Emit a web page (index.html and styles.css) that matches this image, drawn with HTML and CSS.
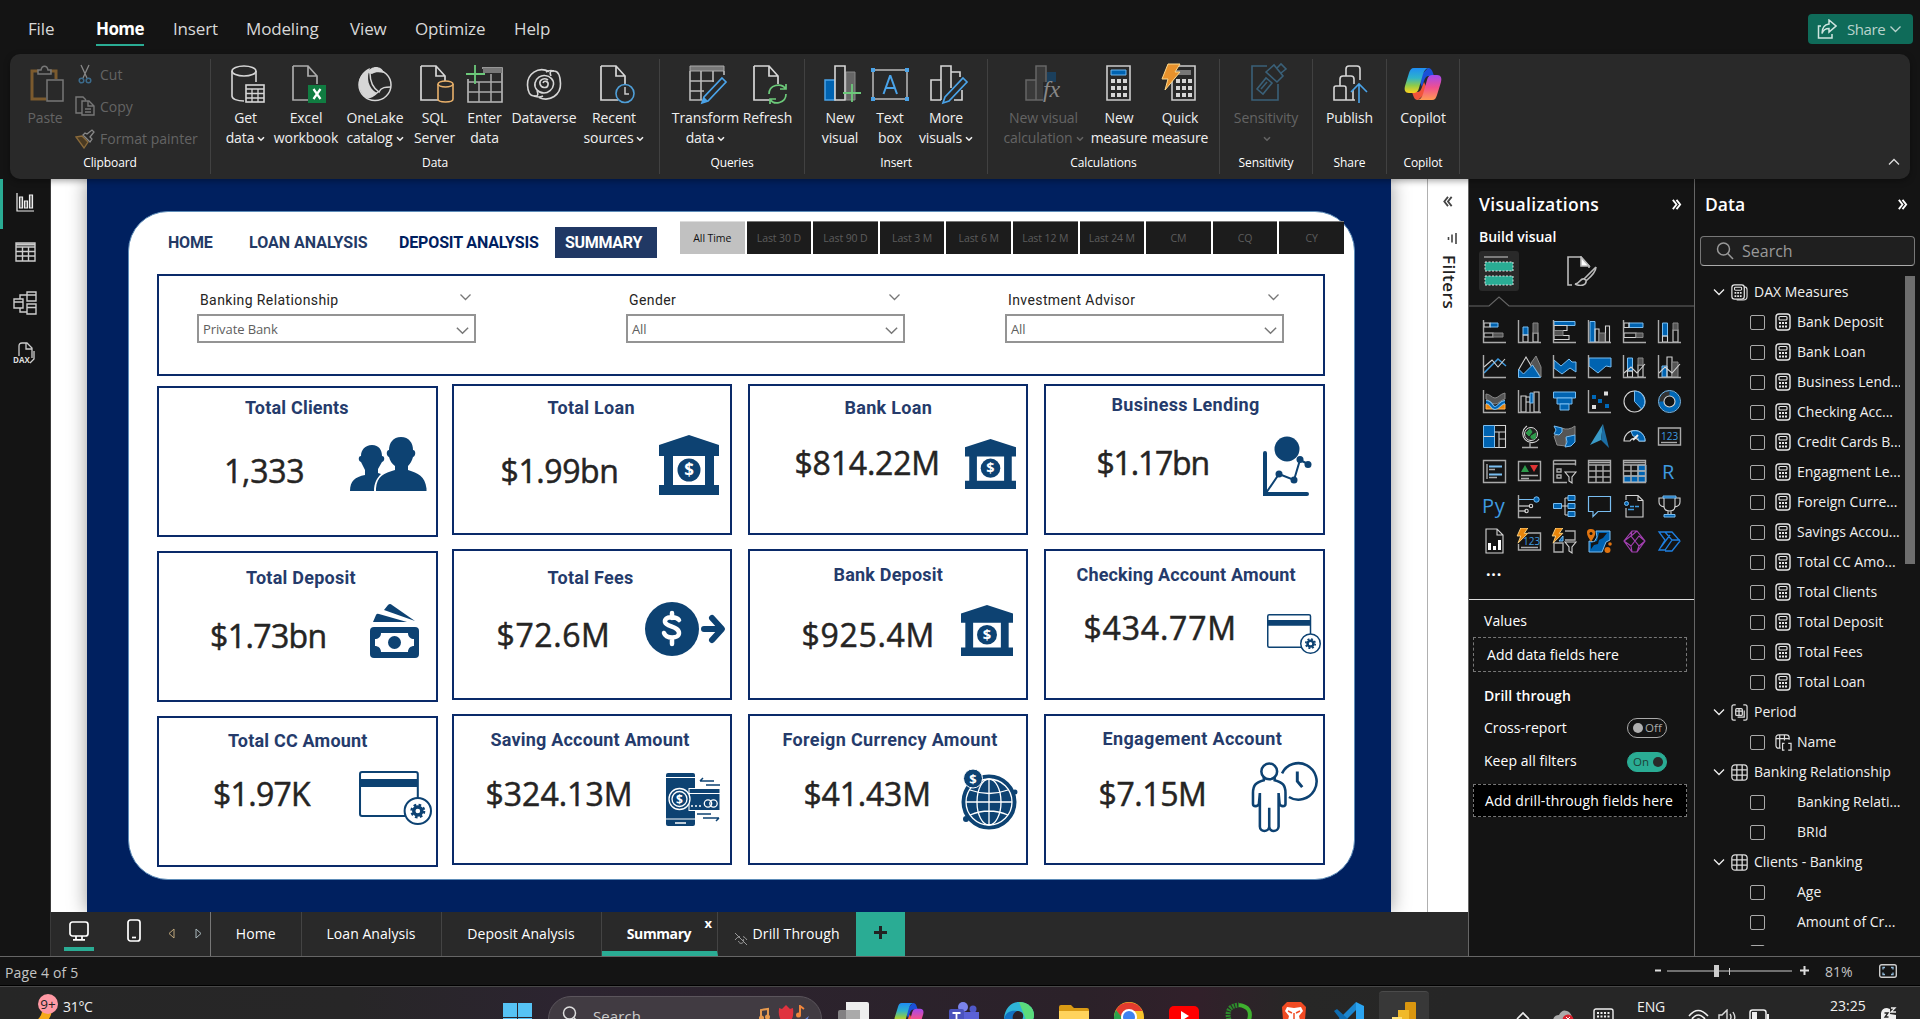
FILE: index.html
```html
<!DOCTYPE html>
<html lang="en">
<head>
<meta charset="utf-8">
<title>Banking report - Summary</title>
<link rel="stylesheet" href="styles.css">
</head>
<body>
<svg class="defs" width="0" height="0">
  <defs>
    <symbol id="chev" viewBox="0 0 12 8"><path d="M1 1.5l5 5 5-5" fill="none" stroke="currentColor" stroke-width="1.3"/></symbol>
    <symbol id="chevb" viewBox="0 0 8 6"><path d="M1 1.2l3 3 3-3" fill="none" stroke="currentColor" stroke-width="1.6"/></symbol>
    <symbol id="dbl" viewBox="0 0 10 12"><path d="M1 1l4 5-4 5M5 1l4 5-4 5" fill="none" stroke="currentColor" stroke-width="2"/></symbol>
    <symbol id="mag" viewBox="0 0 18 18"><circle cx="7.5" cy="7" r="6" fill="none" stroke="currentColor" stroke-width="1.5"/><path d="M11.7 11.5L17 17" stroke="currentColor" stroke-width="1.5"/></symbol>
    <symbol id="calc" viewBox="0 0 16 18"><rect x="1" y="1" width="14" height="16" rx="3" fill="none" stroke="#e6e6e6" stroke-width="1.4"/><rect x="4" y="3.5" width="8" height="3.5" rx="1" fill="none" stroke="#e6e6e6" stroke-width="1.2"/><path d="M4 10h2M7 10h2M10 10h2M4 13.5h2M7 13.5h2M10 13.5h2" stroke="#e6e6e6" stroke-width="2"/></symbol>
    <symbol id="tbl" viewBox="0 0 16 16"><rect x=".8" y=".8" width="14.4" height="14.4" rx="3" fill="none" stroke="#ddd" stroke-width="1.2"/><path d="M5.5 1v14M10.5 1v14M1 5.5h14M1 10.5h14" stroke="#ddd" stroke-width="1.2"/></symbol>
    <symbol id="doc" viewBox="0 0 34 38"><path d="M1 1h15l9 10v8M1 1v34h17M16 1v10h9" fill="none" stroke="currentColor" stroke-width="1.7"/></symbol>
    <symbol id="bank" viewBox="0 0 60 60" preserveAspectRatio="none"><path fill="#0d4272" d="M30 0L60 10v11h-5v29h5v10H0V50h5V21H0V10zM14 21v29h32V21z" fill-rule="evenodd"/><circle cx="30" cy="35" r="11.5" fill="#0d4272"/><text x="30" y="41" text-anchor="middle" font-size="17" font-weight="700" fill="#fff" font-family="Open Sans, sans-serif">$</text></symbol>
    <symbol id="card" viewBox="0 0 72 54" preserveAspectRatio="none"><rect x="1" y="1" width="57" height="44" rx="2" fill="#fff" stroke="#0d4272" stroke-width="2"/><path d="M1 8h57v8H1z" fill="#0d4272"/><circle cx="58" cy="40" r="13" fill="#fff" stroke="#0d4272" stroke-width="2"/><circle cx="58" cy="40" r="4" fill="none" stroke="#0d4272" stroke-width="3.4"/><circle cx="58" cy="40" r="6.3" fill="none" stroke="#0d4272" stroke-width="2.2" stroke-dasharray="2.6 2.35"/></symbol>
    <linearGradient id="cpA" x1="0" y1="0" x2="0" y2="1"><stop offset="0" stop-color="#1e8df5"/><stop offset=".4" stop-color="#2fb3c9"/><stop offset=".7" stop-color="#8ecb4a"/><stop offset="1" stop-color="#ffd21e"/></linearGradient>
    <linearGradient id="cpB" x1="0" y1="0" x2="0" y2="1"><stop offset="0" stop-color="#a348f0"/><stop offset=".5" stop-color="#f0508f"/><stop offset="1" stop-color="#ff9b52"/></linearGradient>
    <symbol id="copilot" viewBox="0 0 38 34"><path d="M24 1c3 0 4 2 5 5l1 3h-5c-3 0-4 2-5 5l-2 6-4-9z" fill="#1a50d8"/><path d="M14 33c-3 0-4-2-5-5l-1-3h5c3 0 4-2 5-5l2-5 4 9z" fill="#f2543a"/><path d="M10 1h15c-3 0-5 3-6 6l-4 14c-1 4-3 5-6 5H5c-4 0-5-3-4-7L5 6c1-3 2-5 5-5z" fill="url(#cpA)"/><path d="M28 33H13c3 0 5-3 6-6l4-14c1-4 3-5 6-5h4c4 0 5 3 4 7l-4 13c-1 3-2 5-5 5z" fill="url(#cpB)"/></symbol>
    <symbol id="bolt" viewBox="0 0 14 18"><path d="M5 0h8L9 6h4L2 17l3-8H1z" fill="#e8850c" stroke="#ffd98a" stroke-width="1"/></symbol>
  </defs>
</svg>

<header class="menubar">
  <nav class="menu">
    <span class="m-file">File</span><span class="m-home">Home</span><span class="m-insert">Insert</span><span class="m-model">Modeling</span><span class="m-view">View</span><span class="m-opt">Optimize</span><span>Help</span>
  </nav>
  <button class="share">
    <svg width="20" height="20" viewBox="0 0 20 20" fill="none" stroke="#cfe5e0" stroke-width="1.5"><path d="M4 7H1.500v12H15v-4M12 1l7 6-7 6V9.500c-4 0-6 2-7 5 0-6 3-9 7-9.500z"/></svg>
    <span>Share</span>
    <svg width="13" height="8"><use href="#chev"/></svg>
  </button>
</header>

<section class="ribbon">
  <div class="group g-clip">
    <div class="clip">
      <div class="btn off paste">
        <svg width="34" height="38" viewBox="0 0 34 38" fill="none"><path d="M8 6H2v28h14M20 6h6v8" stroke="#7b5a2e" stroke-width="3"/><path d="M8 8V5h3c1-5 6-5 7 0h3v4H8z" stroke="#777" stroke-width="1.5"/><rect x="17" y="15" width="16" height="21" stroke="#777" stroke-width="1.5"/></svg>
        <span>Paste</span>
      </div>
      <div class="clip-list off">
        <span class="cl"><svg width="20" height="20" viewBox="0 0 20 20" fill="none"><path d="M6 1l6 13M14 1L8 14" stroke="#888" stroke-width="1.300"/><circle cx="6.500" cy="16.500" r="2.300" stroke="#3c6b8c" stroke-width="1.500"/><circle cx="13.500" cy="16.500" r="2.300" stroke="#3c6b8c" stroke-width="1.500"/></svg>Cut</span>
        <span class="cl"><svg width="20" height="20" viewBox="0 0 20 20" fill="none" stroke="#777" stroke-width="1.400"><path d="M7 17H1V1h7l3 3M7 5h7l5 5v9H7zM13 5v5h6M10 13h6M10 16h6"/></svg>Copy</span>
        <span class="cl"><svg width="20" height="20" viewBox="0 0 20 20" fill="none"><path d="M1 8l6-1 6 6-4 6z" fill="#4a3a22" stroke="#8a6a3a" stroke-width="1.300"/><path d="M8 6l7 7 2-3-2-2 4-5-2-2-5 4-2-1z" stroke="#888" stroke-width="1.300"/></svg>Format painter</span>
      </div>
    </div>
    <div class="glabel">Clipboard</div>
  </div>

  <div class="group g-data">
    <div class="btns">
      <div class="btn nudge"><svg width="34" height="38" viewBox="0 0 34 38" fill="none" stroke="#d6d6d6" stroke-width="1.600"><ellipse cx="13" cy="6" rx="12" ry="5"/><path d="M1 6v25c0 3 5 5 12 5M25 6v11"/><rect x="15" y="20" width="18" height="17"/><path d="M15 24h18M21 24v13M27 24v13M15 28.500h18M15 33h18" stroke-width="1.300"/></svg><span>Get<br>data<svg class="cv"><use href="#chevb"/></svg></span></div>
      <div class="btn nudge"><svg width="34" height="38" viewBox="0 0 34 38"><g color="#aaa"><use href="#doc"/></g><rect x="16" y="20" width="18" height="18" fill="#107c41"/><path d="M21.500 24l7 10M28.500 24l-7 10" stroke="#fff" stroke-width="2.200"/></svg><span>Excel<br>workbook</span></div>
      <div class="btn"><svg width="34" height="38" viewBox="0 0 34 38"><path d="M12 3c-12 5-15 19-5 29 4 2 8 0 12-4C10 23 8 13 12 3z" fill="#d6d6d6"/><path d="M10 8c2-8 14-8 16 0-5-1-9-1-12 1z" fill="#d6d6d6"/><ellipse cx="17" cy="20" rx="16" ry="15.500" fill="none" stroke="#d6d6d6" stroke-width="1.500"/><path d="M12 8c0 9 3 15 9 19 2-5 7-5 12-5M8 33c5 0 9-3 12-6" fill="none" stroke="#d6d6d6" stroke-width="1.500"/></svg><span>OneLake<br>catalog<svg class="cv"><use href="#chevb"/></svg></span></div>
      <div class="btn nudge"><svg width="34" height="38" viewBox="0 0 34 38"><g color="#d6d6d6"><use href="#doc"/></g><path d="M18 19v15c0 4 15 4 15 0V19" fill="#292929" stroke="#e8b06a" stroke-width="1.600"/><ellipse cx="25.500" cy="19" rx="7.500" ry="3" fill="#292929" stroke="#e8b06a" stroke-width="1.600"/></svg><span>SQL<br>Server</span></div>
      <div class="btn"><svg width="38" height="38" viewBox="0 0 38 38" fill="none"><path d="M16 3h20v34H2V14" stroke="#bbb" stroke-width="1.600"/><path d="M17 3h19v5H17z" fill="#777"/><path d="M13 17v20M25 9v28M2 17h34M2 27h34" stroke="#aaa" stroke-width="1.500"/><path d="M9 0v19M0 9h19" stroke="#6cc97a" stroke-width="1.800"/></svg><span>Enter<br>data</span></div>
      <div class="btn"><svg width="36" height="38" viewBox="0 0 36 38" fill="none" stroke="#d6d6d6" stroke-width="1.600"><path d="M23 6.500C12 1 1 9 1.500 20c.3 7 3 11 6.500 11 5 1 4-3 3-5"/><path d="M13 32.500c11 5 22-3 21.500-14C34.200 11 32 6 28 6c-5-1-4 3-3 5"/><path d="M8 31c3 1 5 2 9 0M28 6c-3-1-5-1-8 1"/><path d="M18 28c-6 0-10-5-9-10s6-8 10-7.500c5 .5 9 4 8.500 9S22 28 18 28z"/><path d="M22 15c-4-3-9 0-8 4s7 5 8 1-4-5-5-2"/></svg><span>Dataverse</span></div>
      <div class="btn nudge"><svg width="34" height="38" viewBox="0 0 34 38"><g color="#d6d6d6"><use href="#doc"/></g><circle cx="25" cy="28.500" r="9" fill="#292929" stroke="#4f9fd8" stroke-width="1.600"/><path d="M25 22v7h4" fill="none" stroke="#ccc" stroke-width="1.500"/></svg><span>Recent<br>sources<svg class="cv"><use href="#chevb"/></svg></span></div>
    </div>
    <div class="glabel">Data</div>
  </div>

  <div class="group g-query">
    <div class="btns">
      <div class="btn nudge"><svg width="38" height="38" viewBox="0 0 38 38" fill="none"><path d="M1 1h34v5H1z" fill="#777" stroke="#aaa"/><path d="M1 6v29h12M12 6v29M24 6v11M35 6v4M1 16h24M1 26h14" stroke="#bbb" stroke-width="1.600"/><path d="M33 13l4 4-18 19-6 2 2-6z" fill="#292929" stroke="#4aa3e8" stroke-width="1.700"/><path d="M13 38l2-6 4 4z" fill="#4aa3e8"/></svg><span>Transform<br>data<svg class="cv"><use href="#chevb"/></svg></span></div>
      <div class="btn nudge"><svg width="34" height="38" viewBox="0 0 34 38"><g color="#d6d6d6"><use href="#doc"/></g><path d="M17 19h17v19H17z" fill="#292929"/><path d="M16 29c0-9 12-12 17-5M33 19v5h-6M33 29c0 9-12 12-16 5M17 39v-5h6" fill="none" stroke="#6cc97a" stroke-width="1.700"/></svg><span>Refresh</span></div>
    </div>
    <div class="glabel">Queries</div>
  </div>

  <div class="group g-insert">
    <div class="btns">
      <div class="btn nudge"><svg width="38" height="38" viewBox="0 0 38 38" fill="none"><path d="M1 15h10v20H1z" fill="#0063b1" stroke="#4aa3e8" stroke-width="1.500"/><path d="M22 7h9v28h-9z" fill="#666" stroke="#888"/><path d="M11 1h10v34H11z" fill="#292929" stroke="#d6d6d6" stroke-width="1.600"/><path d="M28 19v18M19 28h18" stroke="#6cc97a" stroke-width="1.800"/></svg><span>New<br>visual</span></div>
      <div class="btn"><svg width="40" height="38" viewBox="0 0 40 38"><path d="M3 5h34v29H3z" fill="none" stroke="#bbb" stroke-width="1.500"/><path d="M1 3h4v4H1zM35 3h4v4h-4zM1 32h4v4H1zM35 32h4v4h-4z" fill="#4aa3e8"/><path d="M13.500 29L20 11h.5L27 29M16 23h8.500" fill="none" stroke="#4aa3e8" stroke-width="2"/></svg><span>Text<br>box</span></div>
      <div class="btn nudge"><svg width="38" height="38" viewBox="0 0 38 38" fill="none" stroke="#d6d6d6" stroke-width="1.600"><path d="M11 15H1v20h10M11 35V1h10v22M21 7h9v5M32 25v10h-8"/><path d="M33 13l4 4-18 19-6 2 2-6z" fill="#292929" stroke="#4aa3e8" stroke-width="1.700"/></svg><span>More<br>visuals<svg class="cv"><use href="#chevb"/></svg></span></div>
    </div>
    <div class="glabel">Insert</div>
  </div>

  <div class="group g-calc">
    <div class="btns">
      <div class="btn off"><svg width="38" height="38" viewBox="0 0 38 38"><path d="M1 15h10v20H1zM11 1h10v34H11z" fill="#3a3a3a" stroke="#666" stroke-width="1.500"/><path d="M22 7h9v10h-9z" fill="#1b3f5c"/><path d="M18 17h20v21H18z" fill="#292929"/><text x="18" y="32" font-family="Liberation Serif, serif" font-style="italic" font-size="24" fill="#888">fx</text></svg><span>New visual<br>calculation<svg class="cv"><use href="#chevb"/></svg></span></div>
      <div class="btn"><svg width="26" height="38" viewBox="0 0 26 38"><path d="M1 1h23v34H1z" fill="none" stroke="#ccc" stroke-width="1.600"/><path d="M5 5h15v5H5z" fill="#0063b1" stroke="#6bb5ee"/><path d="M5 16h16M5 23h16M5 30h16" stroke="#d6d6d6" stroke-width="4" stroke-dasharray="4 2"/></svg><span>New<br>measure</span></div>
      <div class="btn"><svg width="34" height="38" viewBox="0 0 34 38"><path d="M9 1h23v34H9z" fill="none" stroke="#ccc" stroke-width="1.600"/><path d="M13 5h15v5H13z" fill="#777"/><path d="M13 16h16M13 23h16M13 30h16" stroke="#d6d6d6" stroke-width="4" stroke-dasharray="4 2"/><path d="M5 -1h12l-5 8h5L2 25l3-11H-1z" fill="#e8922c" stroke="#ffd98a"/></svg><span>Quick<br>measure</span></div>
    </div>
    <div class="glabel">Calculations</div>
  </div>

  <div class="group g-sens">
    <div class="btns"><div class="btn off nudge"><svg width="34" height="38" viewBox="0 0 34 38" fill="none" stroke="#3a6078" stroke-width="1.600"><path d="M16 1H1v34h26V19"/><path d="M6 24l9-11 6 5-9 11z"/><path d="M10 24l6-7" /><path d="M15 7l8-7 9 11-6 6zM26 3l4-4 5 5-5 4"/></svg><span>Sensitivity<br><svg class="cv"><use href="#chevb"/></svg></span></div></div>
    <div class="glabel">Sensitivity</div>
  </div>
  <div class="group g-share">
    <div class="btns"><div class="btn"><svg width="34" height="38" viewBox="0 0 34 38" fill="none" stroke="#d6d6d6" stroke-width="1.600"><path d="M22 35H1V23q0-2 2-2h8q2 0 2 2v12M7 21v-7q0-3 3-3h8q3 0 3 3v5M13 11V4q0-3 3-3h8q3 0 3 3v11M20 25v10"/><path d="M26 38V19M18 27l8-8 8 8" stroke="#4aa3e8"/></svg><span>Publish</span></div></div>
    <div class="glabel">Share</div>
  </div>
  <div class="group g-cop">
    <div class="btns"><div class="btn"><svg width="38" height="38" viewBox="0 0 38 36"><use href="#copilot"/></svg><span>Copilot</span></div></div>
    <div class="glabel">Copilot</div>
  </div>
  <svg class="collapse" width="12" height="8"><use href="#chev"/></svg>
</section>

<main class="work">
  <aside class="rail">
    <div class="rail-item on"><svg width="18" height="19" viewBox="0 0 18 19" fill="none" stroke="#eee" stroke-width="1.200"><path d="M1 0v18h17"/><path d="M3.500 4h3v11h-3zM8.500 8h3v7h-3zM13.500 2h3v13h-3z" fill="#666"/></svg></div>
    <div class="rail-item"><svg width="21" height="20" viewBox="0 0 21 20" fill="none" stroke="#ccc" stroke-width="1.400"><path d="M1 1h19v18H1zM1 5h19M1 9.500h19M1 14h19M7.500 5v14M13.500 5v14"/><path d="M1 2.500h19" stroke-width="2"/></svg></div>
    <div class="rail-item"><svg width="24" height="24" viewBox="0 0 24 24" fill="none" stroke="#ccc" stroke-width="1.400"><path d="M14 1h9v9h-9zM14 13h9v10h-9zM1 8h9v9H1zM14 4h9M14 16.500h9M1 11h9M7 8V4h7M7 17v4h7"/></svg></div>
    <div class="rail-item"><svg width="23" height="22" viewBox="0 0 23 22" fill="none" stroke="#ccc" stroke-width="1.300"><path d="M6 14V4q0-3 3-3h5l5 5v10M13 1v6h6M21 9v8l-4 4"/><text x="0" y="21" font-size="8" font-weight="700" fill="#ddd" stroke="none" font-family="Open Sans, sans-serif">DAX</text></svg></div>
  </aside>

  <div class="center">
    <div class="stage">
      <div class="canvas">
        <div class="page">
          <div class="sheet">
            <div class="topbar">
              <span class="t-home">HOME</span><span class="t-loan">LOAN ANALYSIS</span><span class="t-dep">DEPOSIT ANALYSIS</span><span class="t-sum">SUMMARY</span>
              <div class="chips"><span class="sel">All Time</span><span>Last 30 D</span><span>Last 90 D</span><span>Last 3 M</span><span>Last 6 M</span><span>Last 12 M</span><span>Last 24 M</span><span>CM</span><span>CQ</span><span>CY</span></div>
            </div>
            <div class="slicers">
              <div class="slicer"><div class="sl-h">Banking Relationship<svg width="13" height="8"><use href="#chev"/></svg></div><div class="sl-b">Private Bank<svg width="15" height="9"><use href="#chev"/></svg></div></div>
              <div class="slicer"><div class="sl-h">Gender<svg width="13" height="8"><use href="#chev"/></svg></div><div class="sl-b">All<svg width="15" height="9"><use href="#chev"/></svg></div></div>
              <div class="slicer"><div class="sl-h">Investment Advisor<svg width="13" height="8"><use href="#chev"/></svg></div><div class="sl-b">All<svg width="15" height="9"><use href="#chev"/></svg></div></div>
            </div>
            <div class="cards">
              <div class="col col1">
                <article class="card k1"><h3>Total Clients</h3><b>1,333</b><svg width="77" height="54" viewBox="0 0 77 54" fill="#0d4272"><path d="M51 0c8 0 12 6 12 13 3 0 3 6 0 7-1 4-3 7-5 9v4c10 3 17 6 18.500 18.500V54H26v-2.500C27 39 34 36 45 33v-4c-3-2-5-5-6-9-3-1-3-7 0-7 0-7 4-13 12-13z"/><path d="M22 8c7 0 10 5 10 11 3 0 3 5 0 6l-4 7v4l3 1c-4 4-7 9-7 17H0c0-10 5-14 15-16v-5l-4-8c-3-1-3-6 0-6 0-6 4-11 11-11z"/></svg></article>
                <article class="card k5"><h3>Total Deposit</h3><b>$1.73bn</b><svg width="49" height="54" viewBox="0 0 49 54"><path d="M14 6l4-5q2-2 4 0l23 16zM3 18l3-7q1-2 3-1l28 8z" fill="#0d4272"/><rect y="23" width="49" height="31" rx="4" fill="#0d4272"/><path d="M11 29h27c0 4 3 6 6 6v7c-3 0-6 2-6 6H11c0-4-3-6-6-6v-7c3 0 6-2 6-6z" fill="#fff"/><circle cx="24.500" cy="38.500" r="6.500" fill="#0d4272"/></svg></article>
                <article class="card k9"><h3>Total CC Amount</h3><b>$1.97K</b><svg width="73" height="54"><use href="#card"/></svg></article>
              </div>
              <div class="col col2">
                <article class="card k2"><h3>Total Loan</h3><b>$1.99bn</b><svg width="60" height="60"><use href="#bank"/></svg></article>
                <article class="card k6"><h3>Total Fees</h3><b>$72.6M</b><svg width="80" height="54" viewBox="0 0 80 54"><circle cx="27" cy="27" r="27" fill="#0d4272"/><path d="M34 18c-3-4-15-4-14 2 1 5 14 4 14 11 0 6-13 6-15 0M27 11v5M27 37v5" fill="none" stroke="#fff" stroke-width="4.500" stroke-linecap="round"/><path d="M59 27h15M67 16l10 11-10 11" fill="none" stroke="#0d4272" stroke-width="6" stroke-linecap="round" stroke-linejoin="round"/></svg></article>
                <article class="card k10"><h3>Saving Account Amount</h3><b>$324.13M</b><svg width="54" height="53" viewBox="0 0 54 53"><path d="M2 0h25q2 0 2 2v49q0 2-2 2H2q-2 0-2-2V2q0-2 2-2z" fill="#0d4272"/><path d="M0 4.500h29M0 46h29" stroke="#fff" stroke-width="1"/><path d="M9 50h11" stroke="#fff" stroke-width="1.500"/><rect x="23" y="15.500" width="31" height="22" fill="#0d4272" stroke="#fff"/><path d="M23 20.500h31" stroke="#fff"/><circle cx="42" cy="30.500" r="3.700" fill="none" stroke="#fff" stroke-width="1.300"/><circle cx="47.500" cy="30.500" r="3.700" fill="none" stroke="#fff" stroke-width="1.300"/><path d="M25 33h10" stroke="#fff" stroke-width="1.300" stroke-dasharray="2 2"/><circle cx="13.500" cy="26" r="10.500" fill="#0d4272" stroke="#fff" stroke-width="1.300"/><circle cx="13.500" cy="26" r="7.500" fill="none" stroke="#fff" stroke-width="1.300"/><text x="13.500" y="30.500" text-anchor="middle" font-size="12" font-weight="700" fill="#fff" font-family="Open Sans, sans-serif">$</text><path d="M34 8h14M40 12h14M34 8l3-3M31 41h14M37 45h16M53 45l-3 3" stroke="#0d4272" stroke-width="1.500"/></svg></article>
              </div>
              <div class="col col3">
                <article class="card k3"><h3>Bank Loan</h3><b>$814.22M</b><svg width="51" height="50"><use href="#bank"/></svg></article>
                <article class="card k7"><h3>Bank Deposit</h3><b>$925.4M</b><svg width="52" height="51"><use href="#bank"/></svg></article>
                <article class="card k11"><h3>Foreign Currency Amount</h3><b>$41.43M</b><svg width="57" height="61" viewBox="0 0 57 61" fill="none"><circle cx="28" cy="33" r="25.500" fill="#0d4272" stroke="#0d4272" stroke-width="4"/><g stroke="#fff" stroke-width="1.300"><circle cx="28" cy="33" r="23"/><ellipse cx="28" cy="33" rx="12" ry="23"/><path d="M28 10v46M5 33h46M9 21q19 7 38 0M9 46q19-8 38 0"/></g><circle cx="12" cy="9.500" r="9.500" fill="#0d4272" stroke="#fff"/><text x="12" y="14.500" text-anchor="middle" font-size="13" font-weight="700" fill="#fff" font-family="Open Sans, sans-serif">$</text><circle cx="54" cy="23" r="2.500" fill="#0d4272"/><circle cx="5" cy="50" r="3" fill="#0d4272"/></svg></article>
              </div>
              <div class="col">
                <article class="card k4"><h3>Business Lending</h3><b>$1.17bn</b><svg width="49" height="61" viewBox="0 0 49 61"><circle cx="24" cy="13" r="12.500" fill="#0d4272"/><path d="M2 17v41h42" fill="none" stroke="#0d4272" stroke-width="4" stroke-linecap="round"/><path d="M3 57l13-19 15 6 6-20 8 4" fill="none" stroke="#0d4272" stroke-width="2"/><g fill="#0d4272"><circle cx="16" cy="38" r="3.500"/><circle cx="31" cy="44" r="3.500"/><circle cx="37" cy="23.500" r="3.500"/><circle cx="45" cy="28.500" r="3.500"/></g></svg></article>
                <article class="card k8"><h3>Checking Account Amount</h3><b>$434.77M</b><svg width="54" height="40"><use href="#card"/></svg></article>
                <article class="card k12"><h3>Engagement Account</h3><b>$7.15M</b><svg width="65" height="71" viewBox="0 0 66 71" fill="none" stroke="#0d4272" stroke-width="2.600"><ellipse cx="17.500" cy="9" rx="8" ry="8"/><path d="M12 15v3c-8 2-11 5-11 13v11c0 3 5 3 6 0l1-11v34c0 6 9 6 9.500 0V46v19c0 6 9 6 9.500 0V31l1 11c1 3 6 3 6 0V31c0-8-3-11-11-13v-3"/><path d="M30.500 11a18.500 18.500 0 1 1 7 24" /><path d="M46 9v10l5 6" stroke-width="3"/></svg></article>
              </div>
            </div>
          </div>
        </div>
      </div>
      <div class="filters">
        <svg class="fl" width="10" height="11"><use href="#dbl"/></svg>
        <svg width="10" height="11" viewBox="0 0 10 11"><path d="M9 0v11M5 1.500v8M1.500 4v3" stroke="#444" stroke-width="1.600"/></svg>
        <span>Filters</span>
      </div>
    </div>
    <div class="tabs">
      <div class="views">
        <span class="desk"><svg width="20" height="20" viewBox="0 0 20 20" fill="none" stroke="#fff" stroke-width="1.700"><rect x="1" y="1" width="18" height="14" rx="2.500"/><path d="M4 18.800h12M7 15v4M13 15v4"/></svg></span>
        <svg width="14" height="23" viewBox="0 0 14 23" fill="none" stroke="#fff" stroke-width="1.700"><rect x="1" y="1" width="12" height="21" rx="2.500"/><path d="M5 18.500h4"/></svg>
        <svg class="a1" width="7" height="11" viewBox="0 0 7 11"><path d="M6 1v9L1 5.500z" fill="none" stroke="#bfa77c"/></svg>
        <svg class="a2" width="7" height="11" viewBox="0 0 7 11"><path d="M1 1v9l5-4.500z" fill="none" stroke="#a9b8bd"/></svg>
      </div>
      <span class="tab tb1">Home</span><span class="tab tb2">Loan Analysis</span><span class="tab tb3">Deposit Analysis</span>
      <span class="tab tb4">Summary<i>x</i></span>
      <span class="tab tb5"><svg width="14" height="14" viewBox="0 0 14 14" fill="none" stroke="#999"><path d="M1 1l12 12M1 8q2-3 5-3.500M13 8q-2-3-4-3.500M4.500 9a2.600 2.600 0 1 0 4.500-2"/></svg>Drill Through</span>
      <span class="add"><svg width="13" height="13" viewBox="0 0 13 13"><path d="M6.500 0v13M0 6.500h13" stroke="#222" stroke-width="3"/></svg></span>
    </div>
  </div>

  <aside class="viz">
    <h2>Visualizations<svg width="11" height="11"><use href="#dbl"/></svg></h2>
    <h4>Build visual</h4>
    <div class="tools">
      <span class="tool on"><svg width="30" height="30" viewBox="0 0 30 30"><path d="M0 1h24" stroke="#999" stroke-width="1.500"/><path d="M1 6h28v9H1zM1 20h28v9H1z" fill="#2aac94" stroke="#ddd" stroke-dasharray="2 1.500"/></svg></span>
      <span class="tool"><svg width="30" height="30" viewBox="0 0 30 30" fill="none" stroke="#bbb" stroke-width="1.600"><path d="M5 29H1V1h13l8 9v2"/><path d="M14 1v9h8z" fill="#fff"/><path d="M29 11L17 23M29 11c0 4-3 8-10 14M17 23c-4-1-4 5-9 5 6 3 12 1 11-4z"/></svg></span>
    </div>
    <svg class="notch" width="225" height="11" viewBox="0 0 225 11"><path d="M0 10h20l10-9 10 9h185" fill="none" stroke="#666" stroke-width="1.200"/></svg>
    <div class="vgrid">
      <!-- bars and columns -->
      <svg viewBox="0 0 23 23"><path d="M7 3h8v4H7z" class="bl"/><path d="M1 3h6v4H1zM1 13h9v4H1z" class="w"/><path d="M10 13h10v4H10z" class="gr"/><path d="M.5 0v22.500H23" class="ax"/></svg>
      <svg viewBox="0 0 23 23"><path d="M5 7h5v8H5z" class="bl"/><path d="M5 15h5v7H5zM15 13h5v9h-5z" class="w"/><path d="M15 3h5v10h-5z" class="gr"/><path d="M.5 0v22.500H23" class="ax"/></svg>
      <svg viewBox="0 0 23 23"><path d="M1 1.500h21v4H1z" class="bl"/><path d="M1 5.500h13v5H1zM1 15.500h15v4H1z" class="w"/><path d="M1 10.500h9v5H1z" class="gr"/><path d="M.5 0v22.500H23" class="ax"/></svg>
      <svg viewBox="0 0 23 23"><path d="M2 1.500h5V22H2z" class="bl"/><path d="M7 9h4v13H7zM17.500 6h4v16h-4z" class="w"/><path d="M11 13h6v9h-6z" class="gr"/><path d="M.5 0v22.500H23" class="ax"/></svg>
      <svg viewBox="0 0 23 23"><path d="M6 3h14v4.500H6z" class="bl"/><path d="M1 3h5v4.500H1zM1 13h12v4.500H1z" class="w"/><path d="M13 13h7v4.500h-7z" class="gr"/><path d="M.5 0v22.500H23" class="ax"/></svg>
      <svg viewBox="0 0 23 23"><path d="M4.500 3h5v13h-5z" class="bl"/><path d="M4.500 16h5v6h-5zM15 10h5v12h-5z" class="w"/><path d="M15 3h5v7h-5z" class="gr"/><path d="M.5 0v22.500H23" class="ax"/></svg>
      <!-- lines and areas -->
      <svg viewBox="0 0 23 23"><path d="M1 18L15 4l8 7" class="lb"/><path d="M1 12l8-7 6 7 7-8" class="w"/><path d="M.5 0v22.500H23" class="ax"/></svg>
      <svg viewBox="0 0 23 23"><path d="M13 8l5-7 5 11v10z" class="gr"/><path d="M1 14L8 2l7 12" class="w"/><path d="M.500 14l5 5 9-9 8 12.500H.5z" class="bl"/></svg>
      <svg viewBox="0 0 23 23"><path d="M1 5l7 6 8-7 3 3h4v10l-6-4-8 6-8-6z" class="bl"/><path d="M.5 0v22.500H23" class="ax"/></svg>
      <svg viewBox="0 0 23 23"><path d="M1 3h22v9l-5-1-8 7-9-7z" class="bl"/><path d="M.5 0v22.500H23" class="ax"/></svg>
      <svg viewBox="0 0 23 23"><path d="M4.500 3h5v13h-5z" class="bl"/><path d="M4.500 16h5v6h-5zM15 10h5v12h-5z" class="w"/><path d="M15 3h5v7h-5z" class="gr"/><path d="M1 18l7-6 6 6 8-9" class="w"/><path d="M.5 0v22.500H23" class="ax"/></svg>
      <svg viewBox="0 0 23 23"><path d="M4 11h5v11H4z" class="bl"/><path d="M9 2h5v20H9z" class="w"/><path d="M14 7h6v15h-6z" class="gr"/><path d="M1 18l6-6 7 6 8-9" class="w"/><path d="M.5 0v22.500H23" class="ax"/></svg>
      <!-- ribbon, waterfall, funnel, scatter, pie, donut -->
      <svg viewBox="0 0 23 23"><path d="M3 4c4 0 6 4 9 4s5-4 10-5v6c-5 1-6 5-10 5S6 10 3 9z" class="gr"/><path d="M3 19v-5h5l4 4 5-4h5v5z" fill="#e8850c" stroke="#ffb257"/><path d="M3 12c6 0 5 6 9 6s5-6 10-6" fill="none" stroke="#79bdf0" stroke-width="4"/><path d="M3 12c6 0 5 6 9 6s5-6 10-6" fill="none" stroke="#0063b1" stroke-width="2"/><path d="M.5 0v22.500H23" class="ax"/></svg>
      <svg viewBox="0 0 23 23"><path d="M3 6h5v16H3zM8 7h4v5H8zM16 2h5v20h-5zM12 12v10" class="w"/><path d="M12 12V3h3v10h-3z" class="bl"/><path d="M.5 0v22.500H23" class="ax"/></svg>
      <svg viewBox="0 0 23 23"><path d="M.500 2h22v6H.5z" class="bl"/><path d="M4 8h15v6H4z" class="bl"/><path d="M7 14h9v6H7z" class="bl"/></svg>
      <svg viewBox="0 0 23 23"><path d="M4 5h4v4H4zM10 9h4v4h-4zM17 14h4v4h-4z" fill="#0068b8"/><path d="M16 1.500h4v4h-4zM4 15h4v4H4z" fill="#ddd"/><path d="M.5 0v22.500H23" class="ax"/></svg>
      <svg viewBox="0 0 23 23"><circle cx="11.500" cy="11.500" r="10.500" class="w"/><path d="M11.500 1a10.500 10.500 0 0 1 7 18l-7-7.500z" class="bl"/></svg>
      <svg viewBox="0 0 23 23"><circle cx="11.500" cy="11.500" r="8" fill="none" stroke="#0068b8" stroke-width="5"/><path d="M11.500 3.500a8 8 0 0 0-8 8" fill="none" stroke="#333" stroke-width="5"/><circle cx="11.500" cy="11.500" r="11" fill="none" stroke="#79bdf0"/><circle cx="11.500" cy="11.500" r="5.500" class="w"/></svg>
      <!-- treemap, maps, gauge, card -->
      <svg viewBox="0 0 23 23"><path d="M.5.5h11v22H.5z" class="bl"/><path d="M11.500.5h11v22h-11M11.500 7h11M16 7v15M16 14h6M.5 11.500h11" class="w"/></svg>
      <svg viewBox="0 0 23 23"><circle cx="13" cy="9" r="6.500" fill="#222" stroke="#ddd"/><path d="M8 8l4-4 2 3-3 4zM13 11l5-3-1 6-4-1z" fill="#2d9a4a" stroke="#2d9a4a"/><path d="M9 1a9 9 0 1 0 12 13" class="w"/><path d="M12 18v4M4 22.500h16" class="ax"/></svg>
      <svg viewBox="0 0 23 23"><path d="M9 3q6 3 13-2v9l-9 3v8l-9-1-3-9 7-3z" class="gr"/><path d="M1 1l8 2v4l-3 3-5-1 2-4zM13 12l9-2v7l-4 4-6 1 2-5z" class="bl"/></svg>
      <svg viewBox="0 0 23 23"><path d="M15-1L2 20l11-5z" fill="#3a9bc8"/><path d="M15-1l6 24-8-8z" fill="#1c6ea4"/></svg>
      <svg viewBox="0 0 23 23"><path d="M1 16a10 10 0 0 1 21 0h-6a5 5 0 0 0-9 0z" class="w"/><path d="M8 6.500A10 10 0 0 1 22 16h-6c0-3-3-5-6-5z" class="bl"/><path d="M10 15l5-5" stroke="#eee" stroke-width="2"/></svg>
      <svg viewBox="0 0 23 23"><path d="M.5 3h22v17H.5z" class="ax"/><path d="M3 17.500h16" class="ax"/><text x="3" y="14.500" font-size="10" fill="#3f9be0" font-family="Open Sans, sans-serif">123</text></svg>
      <!-- multi-row card, kpi, slicer, table, matrix, R -->
      <svg viewBox="0 0 23 23"><path d="M.5.5h22v22H.5zM4 4v15M6 9.500h6M6 17.500h8" class="ax"/><path d="M6 6.500h13M6 14.500h13" stroke="#79bdf0" stroke-width="2"/></svg>
      <svg viewBox="0 0 23 23"><path d="M.5 1.500h22v19H.5zM3 15.500h17M3 18.500h8" class="ax"/><path d="M3 12l4-7 4 7z" fill="#2d9a4a"/><path d="M12 5h8l-4 7z" fill="#e03434"/></svg>
      <svg viewBox="0 0 23 23"><path d="M.5.5h22v5M.5.5v22H14M.5 4h22M4 9h4v3H4zM4 15h4v3H4z" class="ax"/><path d="M12 12h11l-4 5v6l-3-2v-4z" class="w pane"/></svg>
      <svg viewBox="0 0 23 23"><path d="M.5.5h22v22H.5zM.5 2.500h22M.5 5h22M.5 11h22M.5 17h22M8 5v17M15 5v17" class="ax"/></svg>
      <svg viewBox="0 0 23 23"><path d="M15 5h8v6h-8zM1 16h22v6H1z" class="bl"/><path d="M15 11h8v5h-8z" class="bl"/><path d="M.5.500h22v22H.5zM.5 2.500h22M.5 5h22M.5 11h22M.5 16h22M8 5v17M15 5v17" class="ax"/></svg>
      <svg viewBox="0 0 23 23"><text x="4" y="19" font-size="20" font-weight="400" fill="#3f9be0" font-family="Open Sans, sans-serif">R</text></svg>
      <!-- Py, influencers, tree, Q&A, narrative, goals -->
      <svg viewBox="0 0 23 23"><text x="-1" y="17.500" font-size="20" letter-spacing=".6" fill="#3f9be0" font-family="Open Sans, sans-serif">Py</text></svg>
      <svg viewBox="0 0 23 23"><path d="M.5 0v22.500H23M1 11h11M1 16h7" class="ax"/><path d="M1 4.500h16" stroke="#79bdf0"/><circle cx="18.500" cy="4.500" r="2.700" class="bl"/><circle cx="13" cy="11" r="1.700" class="w"/><circle cx="8.500" cy="16" r="1.700" class="w"/></svg>
      <svg viewBox="0 0 23 23"><path d="M8 11h7M12 3v17M12 3h3M12 20h3" class="w"/><path d="M.5 8.500h8v5h-8z" class="bl"/><path d="M15 .5h7v5h-7zM15 8.500h7v5h-7zM15 16.500h7v5h-7z" class="bl"/></svg>
      <svg viewBox="0 0 23 23"><path d="M.5 1.500h22v15H10l-5 5v-5H.5z" fill="none" stroke="#79bdf0" stroke-width="1.200"/></svg>
      <svg viewBox="0 0 23 23"><path d="M3 5V.500h12l5 5V22H3v-9M15 .5v5h5" class="w"/><path d="M7 11.500h4M12 11.500h4M5 14.500h6" stroke="#3f9be0" stroke-width="1.300"/><circle cx="3.500" cy="8.500" r="2" class="bl"/></svg>
      <svg viewBox="0 0 23 23"><path d="M6 2v9q0 5 5.500 5t5.500-5V2M6 3H1v4q0 4 5 5M17 3h5v4q0 4-5 5M10 16v4M13 16v4" class="w"/><path d="M5 1h13v2H5zM6 19.500h11v2.500H6z" class="bl"/></svg>
      <!-- paginated report, new card, new slicer, ArcGIS, apps, automate -->
      <svg viewBox="0 0 23 23"><path d="M3-1h11l6 6v18H3zM14-1v6h6" class="w"/><path d="M5 13h3v7H5zM10 16h3v4h-3zM15 10h3v10h-3z" fill="#fff"/></svg>
      <svg viewBox="0 0 23 23"><path d="M10 3h12.500v17H.5v-6M3 17.500h17" class="ax"/><text x="5" y="15" font-size="10" fill="#3f9be0" font-family="Open Sans, sans-serif">123</text><use href="#bolt" x="-2" y="-2" width="13" height="16"/></svg>
      <svg viewBox="0 0 23 23"><path d="M12 1h10v9H12M1 13v9h9v-9z" class="ax"/><path d="M6 11l4-5v5z" class="bl"/><path d="M12 12h11l-4 5v6l-3-2v-4z" class="w pane"/><use href="#bolt" x="-2" y="-2" width="13" height="16"/></svg>
      <svg viewBox="0 0 23 23"><path d="M8 1h14v9l-4 2-2 5-2 5H1V11l5 1 3-5z" class="bl"/><path d="M11 3h8l-4 5-4 2-1 4-4 1-3 4v-6l6-2z" fill="#141414"/><path d="M3-1c5 0 5 5 3 8l-3 5c-2-4-4-6-4-9s1-4 4-4z" fill="#e07410"/><circle cx="3" cy="3.500" r="1.500" fill="#141414"/><circle cx="19.500" cy="20" r="3" fill="#e07410"/><circle cx="22" cy="14" r="1.800" fill="#e07410"/></svg>
      <svg viewBox="0 0 23 23" fill="none" stroke="#a23fb0" stroke-width="1.200"><path d="M9 1h5l8 10-8 11H9L1 11zM9 1l-1 5 8 10M14 1L8 6M1 11l7-5M8 16l8-10 6 5M8 16l-7-5M8 16l1 6M16 16l-2 6M16 16l6-5"/></svg>
      <svg viewBox="0 0 23 23" fill="none" stroke="#1f7fe0" stroke-width="1.300"><path d="M1 2h6l7 8-7 10H1l6-10zM7 2h7l8 9-8 10H7M14 10h8M3 17L12 5"/></svg>
      <span class="more">...</span>
    </div>
    <div class="wells">
      <p class="v1">Values</p>
      <div class="drop d1">Add data fields here</div>
      <p class="v2">Drill through</p>
      <p class="v3">Cross-report<span class="tog"><i></i>Off</span></p>
      <p class="v4">Keep all filters<span class="tog on">On<i></i></span></p>
      <div class="drop d2">Add drill-through fields here</div>
    </div>
  </aside>

  <aside class="data">
    <h2>Data<svg width="11" height="11"><use href="#dbl"/></svg></h2>
    <div class="search"><svg width="18" height="18"><use href="#mag"/></svg>Search</div>
    <div class="treewrap">
    <ul class="tree">
      <li class="t"><svg class="c"><use href="#chev"/></svg><svg class="ti" viewBox="0 0 18 18"><path d="M14 3q3 0 3 3v7q0 4-4 4H6" fill="none" stroke="#ddd" stroke-width="1.200"/><use href="#calc" width="15" height="17"/></svg>DAX Measures</li>
      <li><i></i><svg><use href="#calc"/></svg>Bank Deposit</li>
      <li><i></i><svg><use href="#calc"/></svg>Bank Loan</li>
      <li><i></i><svg><use href="#calc"/></svg>Business Lend...</li>
      <li><i></i><svg><use href="#calc"/></svg>Checking Acc...</li>
      <li><i></i><svg><use href="#calc"/></svg>Credit Cards B...</li>
      <li><i></i><svg><use href="#calc"/></svg>Engagment Le...</li>
      <li><i></i><svg><use href="#calc"/></svg>Foreign Curre...</li>
      <li><i></i><svg><use href="#calc"/></svg>Savings Accou...</li>
      <li><i></i><svg><use href="#calc"/></svg>Total CC Amo...</li>
      <li><i></i><svg><use href="#calc"/></svg>Total Clients</li>
      <li><i></i><svg><use href="#calc"/></svg>Total Deposit</li>
      <li><i></i><svg><use href="#calc"/></svg>Total Fees</li>
      <li><i></i><svg><use href="#calc"/></svg>Total Loan</li>
      <li class="t"><svg class="c"><use href="#chev"/></svg><svg class="ti" viewBox="0 0 18 18" fill="none" stroke="#ddd" stroke-width="1.300"><path d="M5 1H3Q1 1 1 3v12q0 2 2 2h2M13 1h2q2 0 2 2v12q0 2-2 2h-2"/><rect x="5" y="5" width="7" height="7" rx="1"/><path d="M5 7.500h7M8.500 5v7M14 7v7H7"/></svg>Period</li>
      <li><i></i><svg class="ti" viewBox="0 0 18 18" fill="none" stroke="#ddd" stroke-width="1.300"><path d="M6 15H4q-3 0-3-3V4q0-3 3-3h8q3 0 3 3v2M5 1v14M10 1v6M1 5h14M10 10H8v7h2M14 10h3v7h-3"/></svg>Name</li>
      <li class="t"><svg class="c"><use href="#chev"/></svg><svg class="ti"><use href="#tbl"/></svg>Banking Relationship</li>
      <li><i></i><svg></svg>Banking Relati...</li>
      <li><i></i><svg></svg>BRId</li>
      <li class="t"><svg class="c"><use href="#chev"/></svg><svg class="ti"><use href="#tbl"/></svg>Clients - Banking</li>
      <li><i></i><svg></svg>Age</li>
      <li><i></i><svg></svg>Amount of Cr...</li>
      <li><i></i></li>
    </ul>
    <div class="sbar"></div>
    </div>
  </aside>
</main>

<footer class="status">
  <span>Page 4 of 5</span>
  <div class="zoomer"><svg width="154" height="14" viewBox="0 0 154 14"><path d="M0 6.500h6M145 6.500h9M149.500 2v9" stroke="#ddd" stroke-width="2"/><path d="M12 7h125M74.500 4v7" stroke="#ccc"/><path d="M59 1h5v12h-5z" fill="#ccc"/></svg><em>81%</em><svg width="18" height="14" viewBox="0 0 18 14" fill="none"><rect x=".7" y=".7" width="16.600" height="12.600" rx="2" stroke="#ccc" stroke-width="1.400"/><path d="M6 3.500H4v2M4 8.500v2h2M12 3.500h2v2M14 8.500v2h-2" stroke="#8fb8d8" stroke-width="1.300"/></svg></div>
</footer>

<footer class="taskbar">
  <div class="weather"><svg width="24" height="26" viewBox="0 0 24 26"><path d="M3 26q4-3 5-8l10-2q-1 7-4 10z" fill="#f5a91b"/><circle cx="14" cy="10" r="10" fill="#ff99a4"/><text x="14" y="15" text-anchor="middle" font-size="13.500" fill="#222" font-family="Open Sans, sans-serif">9+</text></svg><span>31°C</span></div>
  <div class="dock">
    <svg class="win" width="29" height="18" viewBox="0 0 29 18"><path d="M0 0h14v14H0zM15 0h14v14H15zM0 15h14v3H0zM15 15h14v3H15z" fill="#56c3f5"/></svg>
    <div class="tsearch"><svg class="tm" width="18" height="18"><use href="#mag"/></svg><span>Search</span>
      <svg width="52" height="20" viewBox="0 0 52 20"><path d="M2 12V5l7-1v7" fill="none" stroke="#e89a4e" stroke-width="2"/><circle cx="2.500" cy="13" r="2.500" fill="#e89a4e"/><circle cx="8.500" cy="12" r="2.500" fill="#e89a4e"/><path d="M20 3l3 1 4-4 4 4 3-1q1 9-2 12l-5 2-5-2q-3-4-2-11z" fill="#e0333f"/><path d="M26 16h2v4h-2z" fill="#3f9a4c"/><path d="M41 10V1l4 3" fill="none" stroke="#f0863c" stroke-width="2"/><circle cx="39.500" cy="10" r="2.500" fill="#f0863c"/><path d="M34 14l7 4 9-7-4 9H38z" fill="#6a8be0"/></svg>
    </div>
    <svg class="ic" width="31" height="18" viewBox="0 0 31 18"><path d="M8 0h21q2 0 2 2v16H8z" fill="#eee"/><path d="M2 8h20v10H0v-8q0-2 2-2z" fill="#999" fill-opacity=".8"/></svg>
    <svg class="ic" width="30" height="18" viewBox="0 0 38 22"><use href="#copilot" width="38" height="34"/></svg>
    <svg class="ic" width="30" height="18" viewBox="0 0 30 18"><circle cx="14" cy="5" r="5" fill="#7b83eb"/><circle cx="24" cy="7" r="3.500" fill="#5059c9"/><path d="M8 10h22v8H8z" fill="#5b62d6"/><rect y="7" width="15" height="15" rx="2" fill="#4b53bc"/><path d="M3.500 11h8M7.500 11v7" stroke="#fff" stroke-width="1.800"/></svg>
    <svg class="ic" width="30" height="18" viewBox="0 0 30 18"><path d="M0 18C0 8 6 0 15 0s15 6 15 13c0 3-1 5-2 5H18c3-6 0-9-5-9S2 12 0 18z" fill="#2fb5d8"/><path d="M15 0c9 0 15 6 15 13 0 3-1 5-2 5h-6z" fill="#5bdc7c"/><path d="M0 18C1 11 6 8 13 9c-4 2-5 5-4 9z" fill="#1272c4"/></svg>
    <svg class="ic" width="30" height="18" viewBox="0 0 30 18"><path d="M2 3h10l3 3h13q2 0 2 2v10H0V5q0-2 2-2z" fill="#d99a14"/><path d="M0 9h30v9H0z" fill="#ffd35c"/></svg>
    <svg class="ic" width="30" height="18" viewBox="0 0 30 18"><circle cx="15" cy="15" r="15" fill="#f8c42c"/><path d="M2 8a15 15 0 0 1 26.500 1H15q-5 1-6 6v3z" fill="#e33b2e"/><path d="M0 15q0-4 2-7l8 10H0z" fill="#2aa24c"/><circle cx="15" cy="15" r="7" fill="#3e82f1" stroke="#fff" stroke-width="2"/></svg>
    <svg class="ic" width="30" height="18" viewBox="0 0 30 18"><rect y="4" width="30" height="20" rx="5" fill="#f00"/><path d="M12 9l8 5-8 5z" fill="#fff"/></svg>
    <svg class="ic" width="30" height="18" viewBox="0 0 30 18" fill="none"><path d="M5 18Q1 4 15 3" stroke="#2c8a2c" stroke-width="5" stroke-dasharray="2 1"/><path d="M15 3q14 2 10 15" stroke="#3fb02f" stroke-width="4"/></svg>
    <svg class="ic" width="30" height="18" viewBox="0 0 30 18"><path d="M8 0h14l5 5-1 13H4L3 5z" fill="#f04b23"/><path d="M8 5l7 1 7-1 2 4-4 5 1 4H9l1-4-4-5z" fill="#fff"/><path d="M9 9l4 2M21 9l-4 2M15 11v7" stroke="#f04b23" stroke-width="1.500"/></svg>
    <svg class="ic" width="30" height="18" viewBox="0 0 30 18"><path d="M22 0l8 4v14h-8z" fill="#2aa4f0"/><path d="M22 0v8L12 18H4z" fill="#1b86cf"/><path d="M0 9l3-2 12 11H7z" fill="#0f6cb0"/></svg>
    <div class="pbi"><svg width="24" height="18" viewBox="0 0 24 18"><rect x="13" width="11" height="18" rx="1" fill="#d9960f"/><rect x="6" y="8" width="11" height="10" fill="#f0b92a"/><rect y="15" width="10" height="3" fill="#ffe074"/></svg></div>
  </div>
  <div class="tray">
    <svg width="14" height="8"><path d="M1 8l6-6 6 6" fill="none" stroke="#eee" stroke-width="1.600"/></svg>
    <svg class="y1" width="22" height="10" viewBox="0 0 22 10"><path d="M0 10Q1 5 6 5 9-1 14 1q5 2 5 8z" fill="#aaa"/><circle cx="15" cy="10" r="5.500" fill="#d8232e"/><path d="M13 7l4 4M17 7l-4 4" stroke="#fff"/></svg>
    <svg class="y2" width="21" height="12" viewBox="0 0 21 12"><rect x="1" y="1" width="19" height="15" rx="2" fill="none" stroke="#eee" stroke-width="1.400"/><path d="M4 5h13M4 8.500h13" stroke="#eee" stroke-width="1.800" stroke-dasharray="2 1.500"/></svg>
    <span class="eng">ENG</span>
    <svg class="y3" width="21" height="11" viewBox="0 0 21 11" fill="none" stroke="#eee" stroke-width="1.600"><path d="M1 7q9-11 19 0M4 10q6-8 13 0M7.500 12q3-4 6 0"/></svg>
    <svg class="y4" width="20" height="11" viewBox="0 0 20 11" fill="none" stroke="#ddd" stroke-width="1.400"><path d="M1 11V6h3l5-5v10M12 5q2 3 0 6M15 3q3 5 1 8"/></svg>
    <svg class="y5" width="20" height="10" viewBox="0 0 20 10"><rect x="1" y="1" width="16" height="12" rx="2.500" fill="none" stroke="#eee" stroke-width="1.500"/><path d="M3 3h5v7H3zM18 5h2v5h-2z" fill="#eee"/></svg>
    <span class="time">23:25</span>
    <svg class="y6" width="18" height="13" viewBox="0 0 18 13"><path d="M1 13V6q1-5 6-5l3 1v5l6 1v5z" fill="#eee"/><path d="M11 1h4l-4 4h5M4 6h4l-4 5h4" fill="none" stroke="#eee" stroke-width="1.300"/><path d="M4.500 6h3.500l-3 4h3.500" fill="none" stroke="#222" stroke-width="1.300"/></svg>
  </div>
</footer>
</body>
</html>
```
FILE: styles.css
```css
* { box-sizing: border-box; }
body {
  margin: 0;
  width: 1920px;
  height: 1019px;
  overflow: hidden;
  background: #141414;
  color: #f0f0f0;
  font-family: "Open Sans", "Noto Sans", sans-serif;
  font-size: 14px;
  display: flex;
  flex-direction: column;
}
svg { display: block; flex: none; }
.defs { position: absolute; }
h2, h3, h4, p, ul { margin: 0; padding: 0; }
i, em { font-style: normal; }

/* menu bar */
.menubar { height: 54px; flex: none; display: flex; justify-content: space-between; align-items: flex-start; padding: 14px 7px 0 28px; }
.menu { display: flex; font-size: 17px; line-height: 29px; height: 32px; color: #d8d8d8; letter-spacing: -.15px; }
.m-file { width: 68px; }
.m-home { width: 48px; margin-right: 29px; font-weight: 700; color: #fff; border-bottom: 2px solid #2aac94; letter-spacing: -.6px; }
.m-insert { width: 73px; }
.m-model { width: 104px; }
.m-view { width: 65px; }
.m-opt { width: 99px; }
.share { width: 105px; height: 30px; border: 0; border-radius: 4px; background: #0f6b59; color: #b9d3cd; font: 15px "Open Sans", sans-serif; letter-spacing: -.4px; display: flex; align-items: center; padding: 0 0 0 9px; }
.share span { margin: 0 4px 0 10px; }

/* ribbon */
.ribbon { position: relative; z-index: 2; height: 125px; flex: none; margin: 0 10px; background: #292929; border-radius: 10px; display: flex; padding: 5px 0; box-shadow: 0 2px 6px rgba(0,0,0,.35); }
.group { border-right: 1px solid #414141; height: 115px; display: flex; flex-direction: column; justify-content: space-between; }
.g-clip { width: 201px; }
.g-data { width: 449px; }
.g-query { width: 145px; }
.g-insert { width: 183px; }
.g-calc { width: 232px; }
.g-sens { width: 93px; }
.g-share { width: 74px; }
.g-cop { width: 73px; }
.glabel { font-size: 12px; line-height: 16px; text-align: center; margin-bottom: 3px; letter-spacing: -.1px; color: #fff; }
.btns { display: grid; justify-content: start; padding-top: 6px; }
.g-data .btns { grid-template-columns: 55px 66px 72px 47px 53px 66px 74px; padding-left: 7px; }
.g-query .btns { grid-template-columns: 69px 55px; padding-left: 11px; }
.g-insert .btns { grid-template-columns: 40px 60px 52px; padding-left: 15px; }
.g-calc .btns { grid-template-columns: 87px 64px 58px; padding-left: 12px; }
.g-sens .btns, .g-share .btns, .g-cop .btns { justify-content: center; }
.btn { display: flex; flex-direction: column; align-items: center; line-height: 20px; text-align: center; white-space: nowrap; font-size: 14px; letter-spacing: -.1px; }
.btn > svg { margin-bottom: 5px; overflow: visible; }
.nudge > svg { margin-left: 5px; }
.btn > span { display: block; margin: 0 -12px; }
.cv { display: inline-block; width: 8px; height: 6px; margin-left: 3px; vertical-align: 1px; }
.off { color: #646464; }
.clip { display: flex; padding: 6px 0 0 17px; height: 90px; }
.paste { width: 36px; margin-right: 12px; }
.paste > svg { margin-left: 4px; }
.clip-list { display: flex; flex-direction: column; margin-top: -7px; }
.cl { height: 32.3px; flex: none; display: flex; align-items: center; gap: 5px; white-space: nowrap; font-size: 14px; }
.collapse { position: absolute; right: 10px; bottom: 13px; transform: rotate(180deg); color: #ddd; }

/* work area */
.work { height: 777px; flex: none; display: flex; }
.rail { width: 51px; border-right: 1px solid #3a3a3a; }
.rail-item { height: 50px; display: flex; align-items: center; justify-content: center; }
.rail-item:nth-child(1) { border-left: 3px solid #2aac94; padding: 0 3px 3px 0; }
.rail-item:nth-child(2) { padding-bottom: 5px; }
.rail-item:nth-child(3) { padding-bottom: 3px; }
.rail-item:nth-child(4) { padding: 0 2px 2px 0; }
.center { width: 1417px; }
.stage { height: 733px; display: flex; background: #fff; }
.canvas { width: 1376px; padding: 0 0 0 36px; overflow: hidden; }
.page { width: 1304px; height: 733px; background: #00205f; box-shadow: 0 0 18px rgba(0,0,0,.4); padding: 32px 36px 0 41px; }
.sheet { height: 669px; background: #fff; border: 1px solid #5d8cb8; border-radius: 40px; padding: 9px 0 0 28px; }
.topbar { display: flex; height: 53px; font-family: Roboto, sans-serif; font-weight: 700; font-size: 16px; line-height: 43px; color: #243a66; white-space: nowrap; }
.t-home { width: 81px; padding-left: 11px; margin-right: 11px; letter-spacing: -.2px; }
.t-loan { width: 150px; }
.t-dep { width: 156px; color: #00205f; letter-spacing: -.15px; }
.t-sum { width: 102px; height: 31px; margin: 6px 23px 0 0; background: #203864; color: #fff; text-align: center; line-height: 31px; padding-right: 5px; letter-spacing: -.3px; }
.chips { width: 664px; height: 33px; display: grid; grid-template-columns: repeat(10, 1fr); gap: 2px; font: 10.5px/33px "Open Sans", sans-serif; letter-spacing: -.1px; text-align: center; color: #5c5c5c; }
.chips span { background: #1c1c1c; border-top: 1px solid #777; line-height: 32px; }
.chips .sel { background: #c1c1c1; color: #111; border-color: #ddd; }

.slicers { width: 1168px; height: 102px; border: 2px solid #0a2a69; display: flex; padding: 14px 0 0 38px; }
.slicer { width: 279px; margin-right: 150px; flex: none; }
.slicer:nth-child(2) { margin-right: 100px; }
.slicer:nth-child(3) { margin-right: 0; }
.sl-h { font: 14px/20px Roboto, sans-serif; letter-spacing: .4px; color: #252423; display: flex; justify-content: space-between; padding: 0 4px 0 3px; height: 24px; }
.sl-h svg { margin-top: 3px; color: #777; }
.sl-b { height: 29px; border: 2px solid #949494; color: #5e5e5e; font-size: 13px; line-height: 27px; display: flex; justify-content: space-between; padding: 0 4px 0 4px; letter-spacing: -.1px; }
.sl-b svg { margin-top: 10px; color: #777; }

.cards { display: grid; grid-template-columns: 294.5px 296px 296px 281px; padding-top: 8px; width: 1168px; }
.col { display: flex; flex-direction: column; gap: 14px; width: 281px; }
.col1 { padding-top: 2px; }
.col2, .col3 { width: 280px; }
.card { height: 151px; border: 2px solid #0a2a69; display: grid; grid-template-columns: 1fr auto; grid-template-rows: 45px 1fr; padding: 0 5px 0 0; --ls: -.2px; }
.card h3 { grid-column: 1 / 3; font: 700 18px/22px Roboto, sans-serif; color: #253b6b; letter-spacing: var(--tl, .12px); white-space: nowrap; padding-left: var(--tx); padding-top: var(--ty); }
.card b { font-weight: 500; font-size: 32px; line-height: 40px; color: #252423; -webkit-text-stroke: .5px #252423; padding-left: var(--vx); padding-top: var(--vy); white-space: nowrap; letter-spacing: var(--ls); width: 0; }
.card svg { margin-top: var(--iy); margin-right: var(--ix); overflow: visible; }
.k1 { --tx: 86px; --ty: 9px; --vx: 65px; --vy: 18px; --iy: 4px; --ix: 4px; --tl: .2px; }
.k2 { --tx: 94px; --ty: 11px; --vx: 47px; --vy: 20px; --iy: 4px; --ix: 6px; --tl: .3px; --ls: -.4px; }
.k3 { --tx: 95px; --ty: 11px; --vx: 45px; --vy: 12px; --iy: 8px; --ix: 5px; --tl: .3px; }
.k4 { --tx: 66px; --ty: 8px; --vx: 51px; --vy: 12px; --iy: 5px; --ix: 6px; --ls: -1.2px; --tl: .3px; }
.k5 { --tx: 87px; --ty: 14px; --vx: 51px; --vy: 18px; --iy: 6px; --ix: 12px; --ls: -.6px; --tl: .25px; }
.k6 { --tx: 94px; --ty: 16px; --vx: 43px; --vy: 19px; --iy: 6px; --ix: 0px; --ls: .6px; --tl: .3px; }
.k7 { --tx: 84px; --ty: 13px; --vx: 52px; --vy: 19px; --iy: 9px; --ix: 8px; --ls: .7px; --tl: .2px; }
.k8 { --tx: 31px; --ty: 13px; --vx: 38px; --vy: 12px; --iy: 18px; --ix: -3px; --ls: .8px; --tl: .15px; }
.k9 { --tx: 69px; --ty: 12px; --vx: 54px; --vy: 11px; --iy: 8px; --ix: -1px; --ls: -.7px; --tl: .2px; }
.k10 { --tx: 37px; --ty: 13px; --vx: 32px; --vy: 13px; --iy: 12px; --ix: 5px; --ls: 0px; --tl: .2px; }
.k11 { --tx: 33px; --ty: 13px; --vx: 54px; --vy: 13px; --iy: 8px; --ix: 3px; --tl: .35px; }
.k12 { --tx: 57px; --ty: 12px; --vx: 53px; --vy: 13px; --iy: 1px; --ix: 1px; --tl: .35px; --ls: -.4px; }

.filters { position: relative; z-index: 1; width: 41px; border-left: 1px solid #b0b0b0; background: #fff; display: flex; flex-direction: column; align-items: center; padding-top: 17px; color: #222; }
.fl { transform: rotate(180deg); color: #444; }
.filters svg + svg { margin: 26px 0 11px 7px; }
.filters span { writing-mode: vertical-rl; font-weight: 600; font-size: 17px; line-height: 20px; margin-left: 1px; letter-spacing: .5px; }

/* page tabs */
.tabs { height: 44px; background: #292929; display: flex; font-size: 14px; line-height: 44px; color: #fff; white-space: nowrap; letter-spacing: .05px; }
.views { width: 160px; border-right: 1px solid #777; display: flex; align-items: flex-start; padding: 7px 0 0 13px; }
.desk { width: 30px; height: 32px; border-bottom: 4px solid #2aac94; padding: 2px 0 0 5px; margin-right: 33px; }
.a1 { margin: 9px 20px 0 27px; }
.a2 { margin-top: 9px; }
.tab { border-right: 1px solid #444; text-align: center; }
.tb1 { width: 90.5px; }
.tb2 { width: 140px; }
.tb3 { width: 160px; }
.tb4 { position: relative; width: 116px; font-weight: 700; border-bottom: 5px solid #2aac94; letter-spacing: -.4px; }
.tb4 i { position: absolute; right: 5px; top: -11px; font-size: 13px; }
.tb5 { width: 138px; display: flex; padding-left: 16px; gap: 5px; border: 0; letter-spacing: .15px; }
.tb5 svg { margin-top: 20px; }
.add { width: 49px; background: #2aac94; padding: 14px 0 0 18px; }

/* visualizations */
.viz { width: 226px; border-left: 1px solid #666; }
.viz h2, .data h2 { font-size: 17.5px; line-height: 24px; font-weight: 600; color: #fff; display: flex; justify-content: space-between; letter-spacing: .3px; align-items: center; }
.data h2 { letter-spacing: 0; }
.viz h2 { padding: 13px 12px 0 10px; }
.viz h4 { font-size: 14px; line-height: 20px; padding: 11px 0 0 10px; font-weight: 600; color: #fff; letter-spacing: 0; }
.tools { display: flex; gap: 43px; padding: 4px 0 0 10px; }
.tool { width: 40px; height: 40px; padding: 5px; }
.tool.on { background: #292929; border-radius: 3px; }
.notch { margin-top: 5px; }
.vgrid { display: grid; grid-template-columns: repeat(6, 23px); grid-auto-rows: 23px; gap: 12px; padding: 13px 0 0 14px; height: 293px; border-bottom: 1px solid #ddd; }
.vgrid svg { width: 23px; height: 23px; overflow: visible; }
.more { font-weight: 700; font-size: 16px; line-height: 10px; padding-left: 3px; letter-spacing: .8px; color: #fff; }
.bl { fill: #0063b1; stroke: #79bdf0; }
.lb { fill: none; stroke: #3f9be0; stroke-width: 1.5; }
.w { fill: none; stroke: #d4d4d4; stroke-width: 1.1; }
.w.pane { fill: #141414; }
.gr { fill: #555; stroke: #888; }
.ax { fill: none; stroke: #aaa; stroke-width: 1.4; }
.wells { padding: 11px 7px 0 4px; color: #fff; letter-spacing: .05px; }
.wells p { padding-left: 11px; line-height: 20px; display: flex; justify-content: space-between; }
.drop { border: 1px dashed #777; }
.d1 { height: 35px; margin-top: 6px; line-height: 33px; padding-left: 13px; }
.wells .v2 { font-weight: 600; margin-top: 14px; }
.wells .v3 { margin-top: 12px; }
.wells .v4 { margin-top: 13px; }
.d2 { height: 33px; background: #000; margin-top: 12px; line-height: 31px; padding-left: 11px; letter-spacing: .15px; }
.tog { width: 40px; height: 20px; border: 1px solid #aaa; border-radius: 10px; margin-right: 20px; font-size: 11.5px; line-height: 18px; color: #aaa; display: flex; align-items: center; padding-left: 5px; gap: 2px; }
.tog i { width: 10px; height: 10px; border-radius: 5px; background: #b0b0b0; }
.tog.on { background: #2aac94; border-color: #2aac94; color: #1d4038; gap: 4px; }
.tog.on i { background: #292929; }
.v4 .tog { margin-top: 1px; }

/* data pane */
.data { width: 226px; border-left: 1px solid #666; }
.data h2 { padding: 13px 12px 0 10px; }
.search { margin: 20px 5px 0 5px; height: 30px; border: 1px solid #777; border-bottom-color: #aaa; border-radius: 4px; background: #1f1f1f; font-size: 16px; color: #999; display: flex; align-items: center; padding: 0 0 0 15px; gap: 8px; }
.treewrap { display: flex; justify-content: space-between; margin-top: 11px; height: 669px; padding-right: 5px; }
.tree { list-style: none; width: 205px; overflow: hidden; letter-spacing: 0; }
.tree li { height: 30px; line-height: 30px; display: flex; align-items: center; padding-left: 55px; white-space: nowrap; }
.tree li i { width: 15px; height: 15px; border: 1px solid #aaa; border-radius: 2px; margin-right: 10px; flex: none; }
.tree li svg { width: 16px; height: 18px; margin-right: 6px; }
.tree .t { padding-left: 18px; }
.tree .t .c { width: 12px; height: 8px; margin-right: 6px; }
.tree .ti { width: 17px; height: 17px; margin-right: 5px; }
.tree .t .ti { margin-right: 6px; }
.sbar { width: 10px; height: 288px; background: #6e6e6e; margin-top: -1px; }

/* status bar */
.status { height: 30px; flex: none; border-top: 1px solid #666; border-bottom: 1px solid #000; display: flex; justify-content: space-between; padding: 0 23px 0 5px; line-height: 31px; color: #c4c4c4; font-size: 14px; letter-spacing: .15px; }
.zoomer { display: flex; align-items: center; }
.zoomer em { margin: 0 24px 0 16px; font-size: 14px; width: 30px; letter-spacing: 0; }

/* taskbar */
.taskbar { height: 33px; flex: none; border-top: 1px solid #484848; background: linear-gradient(90deg, #262626 0, #272627 350px, #2c2430 560px, #2b2129 1080px, #31202a 1200px, #272726 1300px, #262626 1450px); display: flex; overflow: hidden; font-size: 14px; }
.weather { width: 503px; padding: 7px 0 0 34px; display: flex; }
.weather span { margin-left: 5px; line-height: 25px; letter-spacing: -.3px; }
.dock { width: 1013px; display: flex; }
.win { margin: 16px 16px 0 0; }
.tsearch { width: 274px; height: 46px; margin: 9px 16px 0 0; border: 1px solid #5b555c; border-radius: 23px; background: #413b42; display: flex; flex: none; padding: 9px 10px 0 13px; }
.tsearch span { flex: 1; margin-left: 13px; line-height: 20px; color: #ccc; letter-spacing: .1px; font-size: 15px; }
.tsearch svg:last-child { margin-top: -1px; }
.tm { color: #ddd; }
.ic { margin: 15px 25px 0 0; }
.pbi { width: 50px; height: 34px; background: #383838; border-top: 1px solid #4b4b4b; border-radius: 4px 4px 0 0; margin: 4px 0 0 -10px; padding: 10px 0 0 13px; }
.tray { display: flex; padding-top: 22px; }
.tray svg { margin-top: 2px; }
.tray .y1 { margin: 1px 0 0 23px; }
.tray .y2 { margin: -1px 0 0 18px; }
.eng { margin: -12px 0 0 23px; line-height: 20px; width: 51px; letter-spacing: -.1px; }
.tray .y3, .tray .y4, .tray .y5, .tray .y6 { margin-top: 0; }
.tray .y4 { margin-left: 9px; }
.tray .y5 { margin-left: 11px; }
.time { margin: -13px 0 0 61px; line-height: 20px; width: 50px; letter-spacing: 0; }
.tray .y6 { margin-top: -2px; }
```
